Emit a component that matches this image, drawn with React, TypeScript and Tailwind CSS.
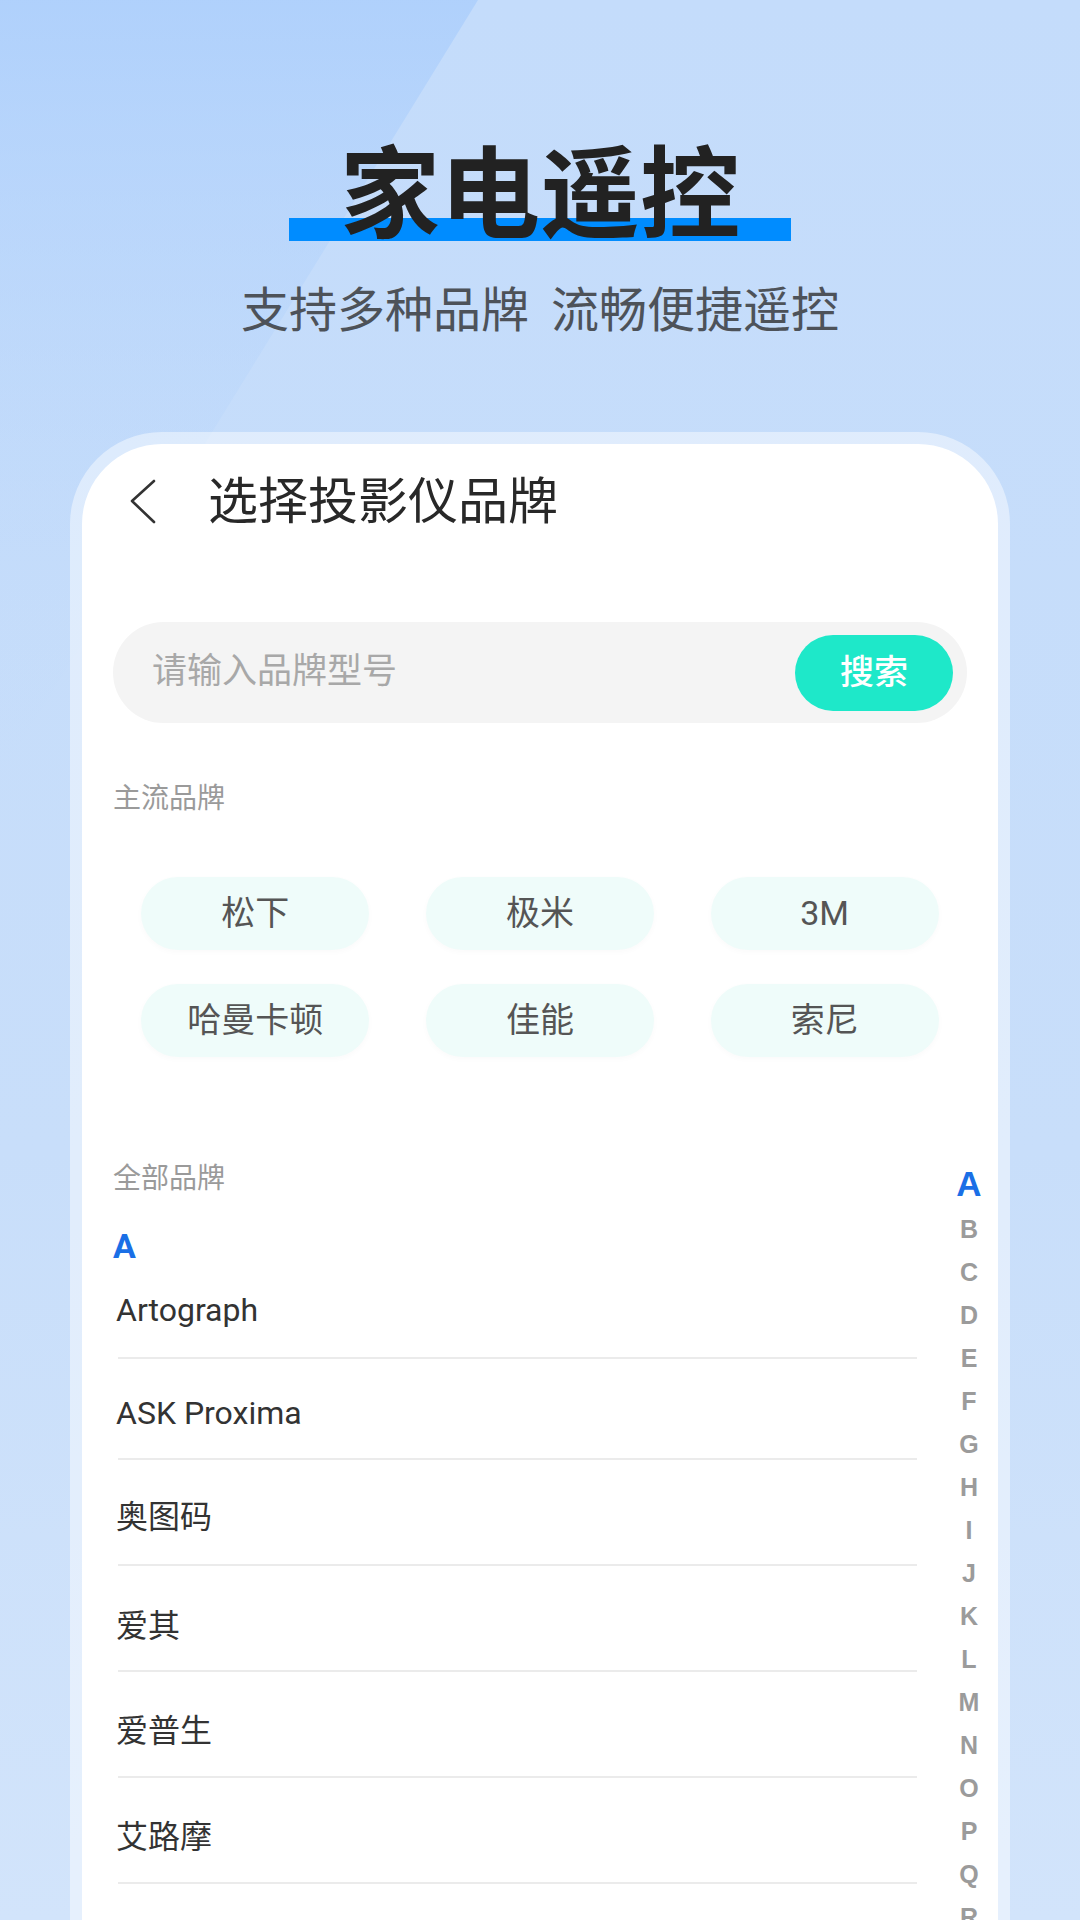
import React from 'react';

const hotBrands = ['松下', '极米', '3M', '哈曼卡顿', '佳能', '索尼'];

// row padding differs a little between latin and cjk names, as in the app
const brands = [
	{ name: 'Artograph', pt: 'pt-[24px]', pb: 'pb-[27px]' },
	{ name: 'ASK Proxima', pt: 'pt-[34px]', pb: 'pb-[25px]' },
	{ name: '奥图码', pt: 'pt-[37px]', pb: 'pb-[27px]' },
	{ name: '爱其', pt: 'pt-[40px]', pb: 'pb-[24px]' },
	{ name: '爱普生', pt: 'pt-[39px]', pb: 'pb-[25px]' },
	{ name: '艾路摩', pt: 'pt-[39px]', pb: 'pb-[25px]' },
];

const letters = 'BCDEFGHIJKLMNOPQR'.split('');

function BackIcon() {
	return (
		<svg width="30" height="46" viewBox="0 0 30 46" fill="none">
			<polyline points="25,2 3,22 25,43" stroke="#333" strokeWidth="2.6" strokeLinecap="round" strokeLinejoin="round" />
		</svg>
	);
}

export default function App() {
	return (
		<div className="relative w-[1080px] h-[1920px] overflow-hidden flex flex-col items-center bg-[linear-gradient(180deg,#c4dcfb_0%,#c8defa_60%,#d2e4fb_100%)] font-['Roboto','Noto_Sans_CJK_SC',sans-serif]">
			{/* diagonal light band at the top left */}
			<svg className="absolute inset-0" width="1080" height="1920" viewBox="0 0 1080 1920">
				<defs>
					<linearGradient id="band" x1="0" y1="0" x2="0" y2="1">
						<stop offset="0" stopColor="#a9cdfc" stopOpacity="0.75" />
						<stop offset="1" stopColor="#c4dcfb" stopOpacity="0" />
					</linearGradient>
				</defs>
				<polygon points="0,0 478,0 0,777" fill="url(#band)" />
			</svg>

			<div className="relative mt-[137px] inline-block">
				<div className="absolute left-[-51px] right-[-51px] top-[81px] h-[23px] bg-[#008cff]" />
				<h1 className="relative text-[100px] leading-none font-bold text-[#222] font-['Noto_Sans_CJK_SC',sans-serif]">家电遥控</h1>
			</div>

			<p className="relative mt-[45px] text-[48px] leading-none text-[#4d5259] font-['Noto_Sans_CJK_SC',sans-serif]">
				支持多种品牌<span className="ml-[22px]">流畅便捷遥控</span>
			</p>

			<div className="relative mt-[102px] w-[940px] flex-1 min-h-0 rounded-t-[92px] bg-white/45 px-[12px] pt-[12px]">
				<div className="h-full rounded-t-[80px] bg-white overflow-hidden">
					<div className="flex items-center pt-[33px]">
						<div className="ml-[47px]">
							<BackIcon />
						</div>
						<h2 className="ml-[49px] text-[50px] leading-none text-[#282828]">选择投影仪品牌</h2>
					</div>

					<div className="px-[31px]">
						<div className="mt-[95px] h-[101px] rounded-full bg-[#f4f4f4] flex items-center justify-between pl-[39px] pr-[14px]">
							<span className="text-[35px] text-[#a8a8a8]">请输入品牌型号</span>
							<button className="w-[158px] h-[76px] rounded-full bg-[#1ee8c9] text-white text-[34px] font-medium">搜索</button>
						</div>

						<p className="mt-[62px] text-[28px] leading-none text-[#9a9a9a]">主流品牌</p>

						<div className="mt-[64px] grid grid-cols-3 gap-y-[34px]">
							{hotBrands.map((b) => (
								<div
									key={b}
									className="justify-self-center w-[228px] h-[73px] rounded-full bg-[#effcfa] shadow-[0_2px_6px_rgba(0,0,0,0.025)] flex items-center justify-center text-[34px] text-[#555]"
								>
									{b}
								</div>
							))}
						</div>
					</div>

					<div className="mt-[104px] flex pl-[31px] pr-[5px]">
						<div className="flex-1">
							<p className="pt-[4px] text-[28px] leading-none text-[#9a9a9a]">全部品牌</p>
							<p className="mt-[33px] text-[34px] leading-[40px] font-bold text-[#1a6fe6]">A</p>
							{brands.map((b) => (
								<div key={b.name}>
									<div className={`${b.pt} ${b.pb} pl-[3px] text-[32px] leading-[40px] text-[#333]`}>{b.name}</div>
									<div className="ml-[5px] mr-[28px] h-[2px] bg-[#ebebeb]" />
								</div>
							))}
						</div>
						<div className="w-[48px] -mt-[2px] flex flex-col items-center font-['Liberation_Sans',sans-serif] font-bold">
							<span className="text-[35px] leading-[49px] text-[#1a6fe6]">A</span>
							{letters.map((l) => (
								<span key={l} className="text-[25px] leading-[43px] text-[#9b9b9b]">
									{l}
								</span>
							))}
						</div>
					</div>
				</div>
			</div>
		</div>
	);
}
